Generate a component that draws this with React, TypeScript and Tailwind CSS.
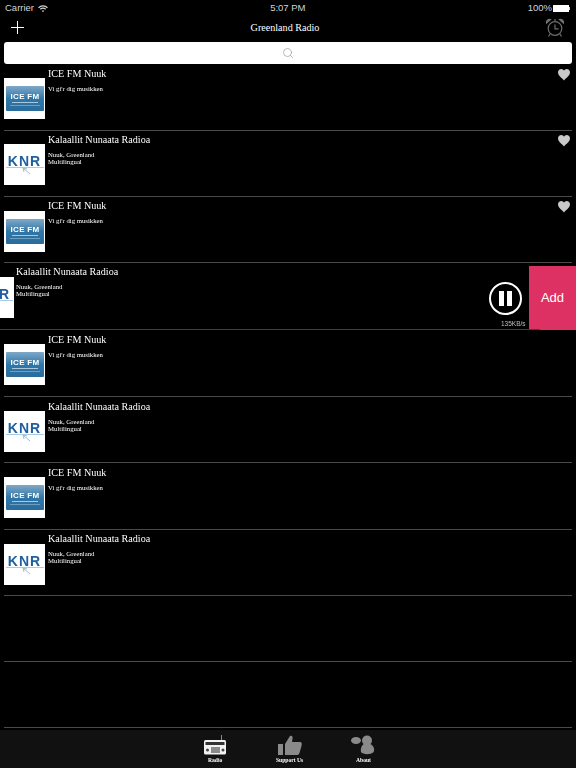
import React from 'react'
import { Search } from 'lucide-react'

type Station = { kind: 'ice' | 'knr'; heart?: boolean; active?: boolean; h: string; logoTop: string; textTop: string }

const stations: Station[] = [
  { kind: 'ice', heart: true, h: 'h-[66px]', logoTop: 'mt-[13.5px]', textTop: 'pt-[2px]' },
  { kind: 'knr', heart: true, h: 'h-[66px]', logoTop: 'mt-[13.5px]', textTop: 'pt-[2px]' },
  { kind: 'ice', heart: true, h: 'h-[66px]', logoTop: 'mt-[14.5px]', textTop: 'pt-[2px]' },
  { kind: 'knr', active: true, h: 'h-[67px]', logoTop: '', textTop: 'pt-[2px]' },
  { kind: 'ice', h: 'h-[67px]', logoTop: 'mt-[14.5px]', textTop: 'pt-[3px]' },
  { kind: 'knr', h: 'h-[66px]', logoTop: 'mt-[14.5px]', textTop: 'pt-[3px]' },
  { kind: 'ice', h: 'h-[67px]', logoTop: 'mt-[14.5px]', textTop: 'pt-[3px]' },
  { kind: 'knr', h: 'h-[66px]', logoTop: 'mt-[14.5px]', textTop: 'pt-[2.5px]' },
]

const IceLogo = () => (
  <div className="flex h-[41px] w-[41px] shrink-0 items-center justify-center bg-white">
    <div className="flex h-[25px] w-[38px] flex-col items-center justify-center rounded-[1px] bg-gradient-to-b from-[#7fa9c8] via-[#2f77a8] to-[#2a6c9c] will-change-transform">
      <span className="font-['Liberation_Sans',sans-serif] text-[8px] leading-[9px] font-bold tracking-[0.3px] text-white">ICE FM</span>
      <div className="mt-[1px] h-[1px] w-[26px] bg-[#a9c8dc]" />
      <div className="mt-[2px] h-[1px] w-[30px] bg-[#6d9fc0]" />
    </div>
  </div>
)

const KnrLogo = () => (
  <div className="flex h-[41px] w-[41px] shrink-0 flex-col items-center justify-center bg-white pt-[1px] will-change-transform">
    <span className="font-['Liberation_Sans',sans-serif] text-[14px] leading-[11px] font-bold tracking-[1px] text-[#1f5f9f]">KNR</span>
    <div className="h-[1px] w-[38px] bg-[#a9cbe4]" />
    <svg width="10" height="7" viewBox="0 0 10 7" className="ml-[4px]">
      <path d="M1 0 L8 6 M1 0 L5 1 M1 0 L2 4" stroke="#9dbcd6" strokeWidth="1" fill="none" />
    </svg>
  </div>
)

const Heart = () => (
  <svg width="12" height="12" viewBox="0 0 24 24" className="absolute top-[4px] right-[2px]">
    <path d="M12 23 C8 18 0 13 0 7 C0 3 3 0 6.500 0 C9 0 11 1.500 12 3.500 C13 1.500 15 0 17.500 0 C21 0 24 3 24 7 C24 13 16 18 12 23 Z" fill="#c9c9c9" />
  </svg>
)

const StationText = ({ kind }: { kind: Station['kind'] }) => (
  <div className="flex flex-col text-white will-change-transform">
    <span className="text-[10.125px] leading-[14px]">{kind === 'ice' ? 'ICE FM Nuuk' : 'Kalaallit Nunaata Radioa'}</span>
    {kind === 'ice' ? (
      <span className="mt-[3.5px] text-[6.750px] leading-[8px]">Vi gi'r dig musikken</span>
    ) : (
      <span className="mt-[3.5px] text-[6.750px] leading-[7.500px]">
        Nuuk, Greenland
        <br />
        Multilingual
      </span>
    )}
  </div>
)

const Row = ({ station }: { station: Station }) => {
  const logo = station.kind === 'ice' ? <IceLogo /> : <KnrLogo />
  if (station.active) {
    return (
      <div className={`${station.h} relative overflow-hidden`}>
        <div className="absolute top-[3px] right-0 flex h-[64px] w-[47px] items-center justify-center bg-[#de3163] font-['Liberation_Sans',sans-serif] text-[13px] text-white">
          Add
        </div>
        <div className={`flex h-full items-start pl-[16px] ${station.textTop}`}>
          <StationText kind={station.kind} />
        </div>
        <div className="absolute top-[14px] left-[-27px]">{logo}</div>
        <div className="absolute top-[19px] left-[489px] flex h-[33px] w-[33px] items-center justify-center gap-[3px] rounded-full border-2 border-white">
          <div className="h-[15px] w-[5px] bg-white" />
          <div className="h-[15px] w-[5px] bg-white" />
        </div>
        <span className="absolute top-[57px] left-[501px] font-['Liberation_Sans',sans-serif] text-[6.500px] leading-[8px] text-[#bdbdbd] will-change-transform">135KB/s</span>
        <div className="absolute right-[36px] bottom-0 left-0 h-[1px] bg-[#3f3f3f]" />
      </div>
    )
  }
  return (
    <div className={`${station.h} relative mx-[4px] flex items-start gap-[3px] border-b border-[#4a4a4a]`}>
      <div className={station.logoTop}>{logo}</div>
      <div className={station.textTop}>
        <StationText kind={station.kind} />
      </div>
      {station.heart && <Heart />}
    </div>
  )
}

export default function App() {
  return (
    <div className="flex h-[768px] w-[576px] flex-col overflow-hidden bg-black font-['Liberation_Serif',serif]">
      {/* status bar */}
      <div className="flex h-[17px] items-center justify-between pr-[6px] pl-[5px] font-['Liberation_Sans',sans-serif] text-[9.500px] text-[#d4d4d4]">
        <div className="flex items-center gap-[4px]">
          <span>Carrier</span>
          <svg width="10" height="8" viewBox="0 0 20 15" fill="none" stroke="#d4d4d4" strokeWidth="2.200">
            <path d="M1 5 C6 0 14 0 19 5" />
            <path d="M4.500 8 C8 5 12 5 15.500 8" />
            <path d="M10 14 L7.500 11 C9 10 11 10 12.500 11 Z" fill="#d4d4d4" stroke="none" />
          </svg>
        </div>
        <span>5:07 PM</span>
        <div className="flex items-center">
          <span className="mr-[1px]">100%</span>
          <div className="h-[7px] w-[16px] bg-white" />
          <div className="h-[3px] w-[1px] bg-[#d4d4d4]" />
        </div>
      </div>

      {/* nav bar */}
      <div className="flex h-[25px] items-center justify-between pr-[11px] pl-[10px]">
        <svg width="15" height="15" viewBox="0 0 15 15" stroke="#ffffff" strokeWidth="1" className="mt-[-4px]">
          <path d="M7.500 1 V14 M1 7.500 H14" />
        </svg>
        <span className="mt-[-4px] text-[10.125px] text-white">Greenland Radio</span>
        <svg width="20" height="19" viewBox="0 0 20 19" fill="none" stroke="#6f6f6f" strokeWidth="1.200" className="mt-[-4px]">
          <circle cx="10" cy="10.500" r="6.800" />
          <path d="M10 6.500 V10.800 H13.500" />
          <path d="M1.500 5 C1 2.500 3 1 5.500 1.500 Z" fill="#6f6f6f" />
          <path d="M18.500 5 C19 2.500 17 1 14.500 1.500 Z" fill="#6f6f6f" />
          <path d="M5 16 L3.500 18.500 M15 16 L16.500 18.500" />
          <path d="M10 1 V3" />
        </svg>
      </div>

      {/* search */}
      <div className="mx-[4px] flex h-[22px] items-center justify-center rounded-[3px] bg-white">
        <Search size={12} strokeWidth={1.500} className="text-[#a0a0a0]" />
      </div>

      {/* list */}
      <div className="flex flex-1 flex-col pt-[0.5px]">
        {stations.map((station, i) => (
          <Row key={i} station={station} />
        ))}
        <div className="mx-[4px] h-[66px] border-b border-[#4a4a4a]" />
        <div className="mx-[4px] h-[66px] border-b border-[#4a4a4a]" />
      </div>

      {/* tab bar */}
      <div className="flex h-[38px] items-start justify-center bg-[#111111] pt-[5px] text-white">
        <div className="flex w-[76px] flex-col items-center">
          <svg width="24" height="20" viewBox="0 0 24 20">
            <path d="M18.500 0 V5" stroke="#8a8a8a" strokeWidth="1" />
            <rect x="1" y="5" width="22" height="14.500" rx="1.500" fill="#f2f2f2" />
            <rect x="2.500" y="7" width="19" height="3" fill="#333333" />
            <rect x="8" y="12" width="9" height="6" fill="#8a8a8a" />
            <circle cx="4.500" cy="15" r="1.500" fill="#444444" />
            <circle cx="20" cy="15" r="1.500" fill="#444444" />
          </svg>
          <span className="mt-[1px] text-[5.625px] leading-[8px] font-bold will-change-transform">Radio</span>
        </div>
        <div className="flex w-[74px] flex-col items-center">
          <svg width="24" height="20" viewBox="0 0 24 20">
            <rect x="0" y="9" width="5" height="11" fill="#8a8a8a" />
            <path d="M7 9 L12 1 C14 0 15 2 14.500 4 L14 7 H22 C24 7 24 9 23.500 11 L21.500 18 C21 19.500 20 20 19 20 H7 Z" fill="#8a8a8a" />
          </svg>
          <span className="mt-[1px] text-[5.625px] leading-[8px] font-bold will-change-transform">Support Us</span>
        </div>
        <div className="flex w-[72px] flex-col items-center">
          <svg width="24" height="20" viewBox="0 0 24 20">
            <ellipse cx="5" cy="5.500" rx="5" ry="3.500" fill="#8a8a8a" />
            <circle cx="16" cy="5.500" r="5" fill="#8a8a8a" />
            <path d="M10 17 C9 12 12 8 16 8 C20 8 24 12 23 16 C22 20 12 20 10 17 Z" fill="#8a8a8a" />
          </svg>
          <span className="mt-[1px] text-[5.625px] leading-[8px] font-bold will-change-transform">About</span>
        </div>
      </div>
    </div>
  )
}
